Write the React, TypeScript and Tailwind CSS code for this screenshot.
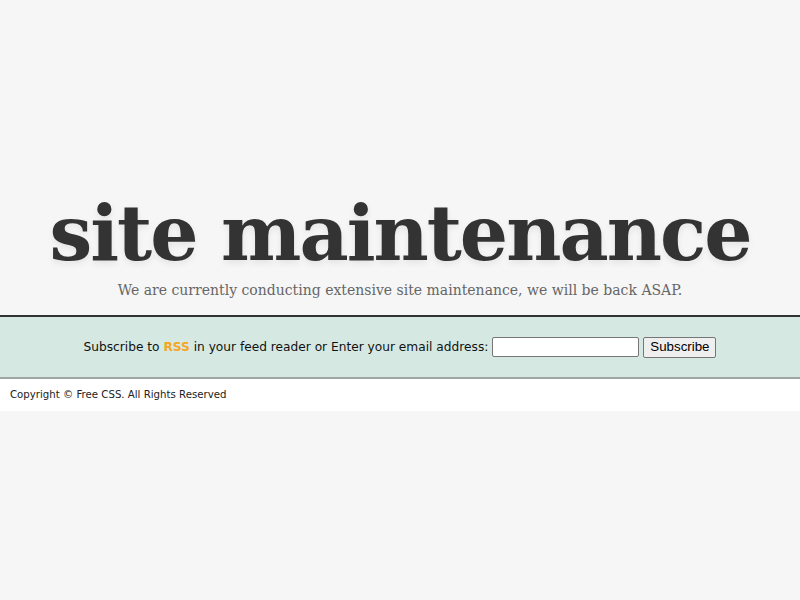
const App = () => {
  return (
    <div className="min-h-[600px] bg-[#f6f6f6]">
      <div className="pt-[186px] text-center">
        <h1 className="font-['DejaVu_Serif',serif] text-[76px] leading-[96px] font-bold tracking-[-2px] text-[#333] [text-shadow:0_3px_6px_rgba(0,0,0,0.08)]">
          site maintenance
        </h1>
        <p className="mt-[-2px] font-['DejaVu_Serif',serif] text-[14px] leading-[20px] text-[#666]">
          We are currently conducting extensive site maintenance, we will be back ASAP.
        </p>
      </div>

      <div className="mt-[15px] flex h-[64px] items-center justify-center border-t-2 border-b-2 border-t-[#333] border-b-[#a0a6a3] bg-[#d5e9e2] font-['DejaVu_Sans',sans-serif] text-[12.2px] text-[#111]">
        <span>
          Subscribe to <b className="text-[#f5a623]">RSS</b> in your feed reader or Enter your email address:
        </span>
        <input
          type="text"
          className="ml-[4px] h-[20px] w-[147px] rounded-[2px] border border-[#767676] bg-white"
        />
        <button className="ml-[4px] h-[21px] rounded-[2px] border border-[#767676] bg-[#efefef] px-[6px] font-['Liberation_Sans',sans-serif] text-[13.3px] leading-none text-black">
          Subscribe
        </button>
      </div>

      <div className="flex h-[32px] items-center bg-white px-[10px] font-['DejaVu_Sans',sans-serif] text-[10.2px] text-[#222]">
        Copyright © Free CSS. All Rights Reserved
      </div>
    </div>
  );
};

export default App;
